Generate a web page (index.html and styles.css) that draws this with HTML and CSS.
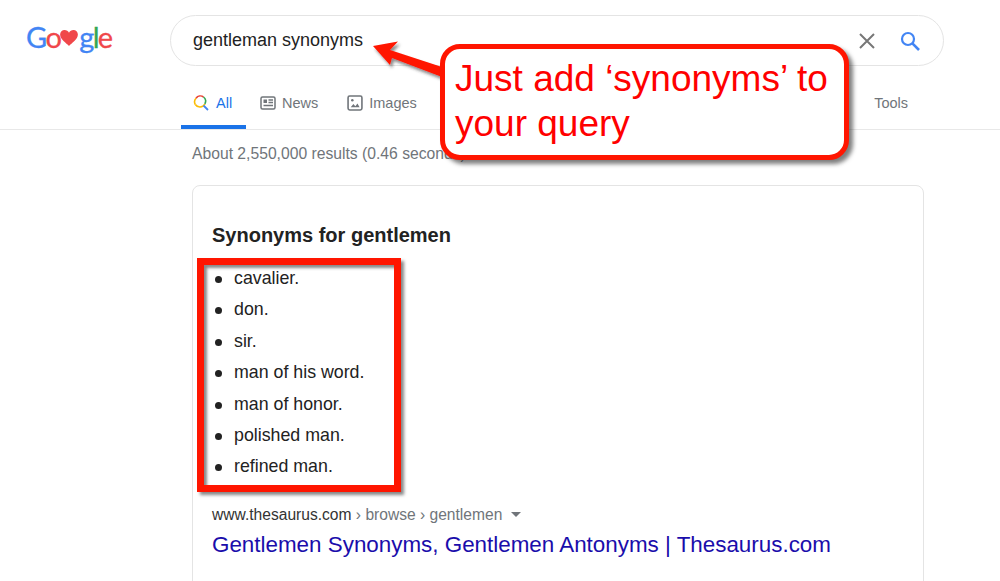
FILE: index.html
```html
<!DOCTYPE html>
<html lang="en">
<head>
<meta charset="utf-8">
<title>gentleman synonyms</title>
<link rel="stylesheet" href="styles.css">
</head>
<body>
<div class="page">
  <header class="top">
    <div class="logo"><span class="b">G</span><span class="r">o</span><svg class="heart" viewBox="0 0 20 18" width="20" height="18"><path d="M10 18C7 15 0 10.500 0 5.200 0 2.200 2.300 0 5 0c2.200 0 4 1.200 5 3 1-1.800 2.800-3 5-3 2.700 0 5 2.200 5 5.200C20 10.500 13 15 10 18z" fill="#f0474a"/></svg><span class="b">g</span><span class="g">l</span><span class="r">e</span></div>
    <div class="search">
      <span class="query">gentleman synonyms</span>
      <svg class="x" viewBox="0 0 16 16" width="16" height="16"><path d="M1 1l14 14M15 1L1 15" stroke="#777" stroke-width="2" fill="none"/></svg>
      <svg class="mag" viewBox="0 0 20 20" width="20" height="20"><circle cx="8" cy="8" r="6" stroke="#4285f4" stroke-width="2.200" fill="none"/><path d="M12.400 12.400L19 19" stroke="#4285f4" stroke-width="2.600" fill="none"/></svg>
    </div>
  </header>
  <nav class="tabs">
    <div class="tab active">
      <svg viewBox="0 0 16 16" width="16" height="16"><path d="M2.300 9.500A5.500 5.500 0 0 1 3 3.200" stroke="#fbbc05" stroke-width="1.600" fill="none"/><path d="M3 3.200A5.500 5.500 0 0 1 10.500 2" stroke="#ea4335" stroke-width="1.600" fill="none"/><path d="M10.500 2A5.500 5.500 0 0 1 11.800 9" stroke="#34a853" stroke-width="1.600" fill="none"/><path d="M11.800 9A5.500 5.500 0 0 1 2.300 9.500" stroke="#fbbc05" stroke-width="1.600" fill="none"/><path d="M10.500 10.500L15 15" stroke="#4285f4" stroke-width="1.800" fill="none"/></svg>
      <span>All</span>
    </div>
    <div class="tab">
      <svg viewBox="0 0 16 14" width="16" height="14"><rect x="1" y="1" width="14" height="12" rx="1.500" stroke="#70757a" stroke-width="1.500" fill="none"/><rect x="3.500" y="3.500" width="3.500" height="3.500" fill="#70757a"/><path d="M8.500 4h4.500M8.500 6.500h4.500M3.500 9.500h9.500" stroke="#70757a" stroke-width="1.300"/></svg>
      <span>News</span>
    </div>
    <div class="tab">
      <svg viewBox="0 0 15 15" width="16" height="16"><rect x="1" y="1" width="13" height="13" rx="1.500" stroke="#70757a" stroke-width="1.500" fill="none"/><circle cx="5" cy="5" r="1.200" fill="#70757a"/><path d="M3.500 11.500l2.500-3 1.800 2 2-2.500 2 3.500z" fill="#70757a"/></svg>
      <span>Images</span>
    </div>
    <div class="tools">Tools</div>
  </nav>
  <main class="content">
    <p class="stats">About 2,550,000 results (0.46 seconds)</p>
    <section class="card">
      <h2>Synonyms for gentlemen</h2>
      <ul>
        <li>cavalier.</li>
        <li>don.</li>
        <li>sir.</li>
        <li>man of his word.</li>
        <li>man of honor.</li>
        <li>polished man.</li>
        <li>refined man.</li>
      </ul>
      <div class="crumb"><span class="site">www.thesaurus.com</span> › browse › gentlemen<span class="caret"></span></div>
      <a class="title" href="#">Gentlemen Synonyms, Gentlemen Antonyms | Thesaurus.com</a>
    </section>
  </main>

  <div class="redbox"></div>
  <svg class="arrow" viewBox="0 0 80 50" width="80" height="50">
    <defs><filter id="s" x="-20%" y="-20%" width="150%" height="150%"><feDropShadow dx="2" dy="3" stdDeviation="1.500" flood-color="#333" flood-opacity=".55"/></filter></defs>
    <path d="M0 6L25 1.500 17 10 72 28 69 37 19 18 17 25z" fill="#ff1500" filter="url(#s)"/>
  </svg>
  <div class="callout">Just add ‘synonyms’ to your query</div>
</div>
</body>
</html>
```
FILE: styles.css
```css
* { box-sizing: border-box; }
html, body { margin: 0; padding: 0; height: 100%; background: #fff; overflow: hidden; }
body { font-family: "Liberation Sans", Arial, sans-serif; color: #222; }
.page { position: relative; width: 1000px; height: 581px; overflow: hidden; }

.top { display: flex; align-items: center; height: 66px; padding: 15px 0 0 26px; }
.logo { width: 144px; display: flex; align-items: center; font-family: Lato, sans-serif; font-size: 29px; font-weight: 400; letter-spacing: -1.700px; line-height: 32px; margin-top: -8px; -webkit-text-stroke: 0.3px; }
.logo .heart { width: 18px; height: 16px; margin: 3px 1px 0 0; }
.b { color: #4285f4; }
.r { color: #f0474a; }
.g { color: #34a853; }
.search { width: 774px; height: 51px; border: 1px solid #e4e4e4; border-radius: 26px; display: flex; align-items: center; padding: 0 23px 0 22px; }
.query { flex: 1; font-size: 18px; color: #222; }
.x { margin-right: 25px; }

.tabs { display: flex; align-items: center; height: 64px; border-bottom: 1px solid #e8e8e8; padding: 0 92px 0 181px; font-size: 14.500px; color: #70757a; }
.tab { height: 100%; display: flex; align-items: center; gap: 6px; padding: 11px 0 0 13px; margin-right: 16px; }
.tab span { line-height: 16px; }
.tab svg { flex: none; }
.tab.active { color: #1a73e8; width: 65px; margin-right: 1px; border-bottom: 4px solid #1a73e8; padding: 15px 0 0 12px; gap: 7px; }
.tools { margin-left: auto; padding-top: 11px; }

.content { padding: 0 0 0 192px; }
.stats { margin: 0; height: 55px; padding-top: 15px; font-size: 15.700px; line-height: 18px; color: #70757a; white-space: nowrap; }
.card { width: 732px; height: 420px; border: 1px solid #e4e4e4; border-radius: 8px; padding: 36px 19px 0; }
h2 { margin: 0; font-size: 20px; line-height: 26px; font-weight: bold; color: #222; }
ul { list-style: none; margin: 15px 0 0; padding: 0; }
li { position: relative; font-size: 17.800px; line-height: 31.400px; padding-left: 22px; color: #222; }
li::before { content: ""; position: absolute; left: 3px; top: 13px; width: 7px; height: 7px; border-radius: 50%; background: #222; }
.crumb { margin-top: 22px; font-size: 15.600px; line-height: 20px; color: #70757a; white-space: pre; display: flex; align-items: center; }
.site { color: #333; }
.caret { display: inline-block; width: 0; height: 0; border: 5px solid transparent; border-top-color: #70757a; border-bottom: 0; margin-left: 9px; }
.title { display: block; margin-top: 5px; font-size: 22.400px; line-height: 30px; color: #1a0dab; text-decoration: none; white-space: nowrap; }

.redbox { position: absolute; left: 197px; top: 258px; width: 204px; height: 234px; border: 7px solid #ff1500; box-shadow: 3px 3px 3px rgba(40,40,40,.55), inset 3px 3px 3px rgba(40,40,40,.55); }
.arrow { position: absolute; left: 373px; top: 40px; }
.callout { position: absolute; left: 440px; top: 44px; width: 409px; height: 116px; background: #fff; border: 5px solid #ff1500; border-radius: 20px; box-shadow: 4px 4px 4px rgba(40,40,40,.6); padding: 7px 8px 0 10px; font-size: 37px; line-height: 45px; color: #ff0000; }
```
